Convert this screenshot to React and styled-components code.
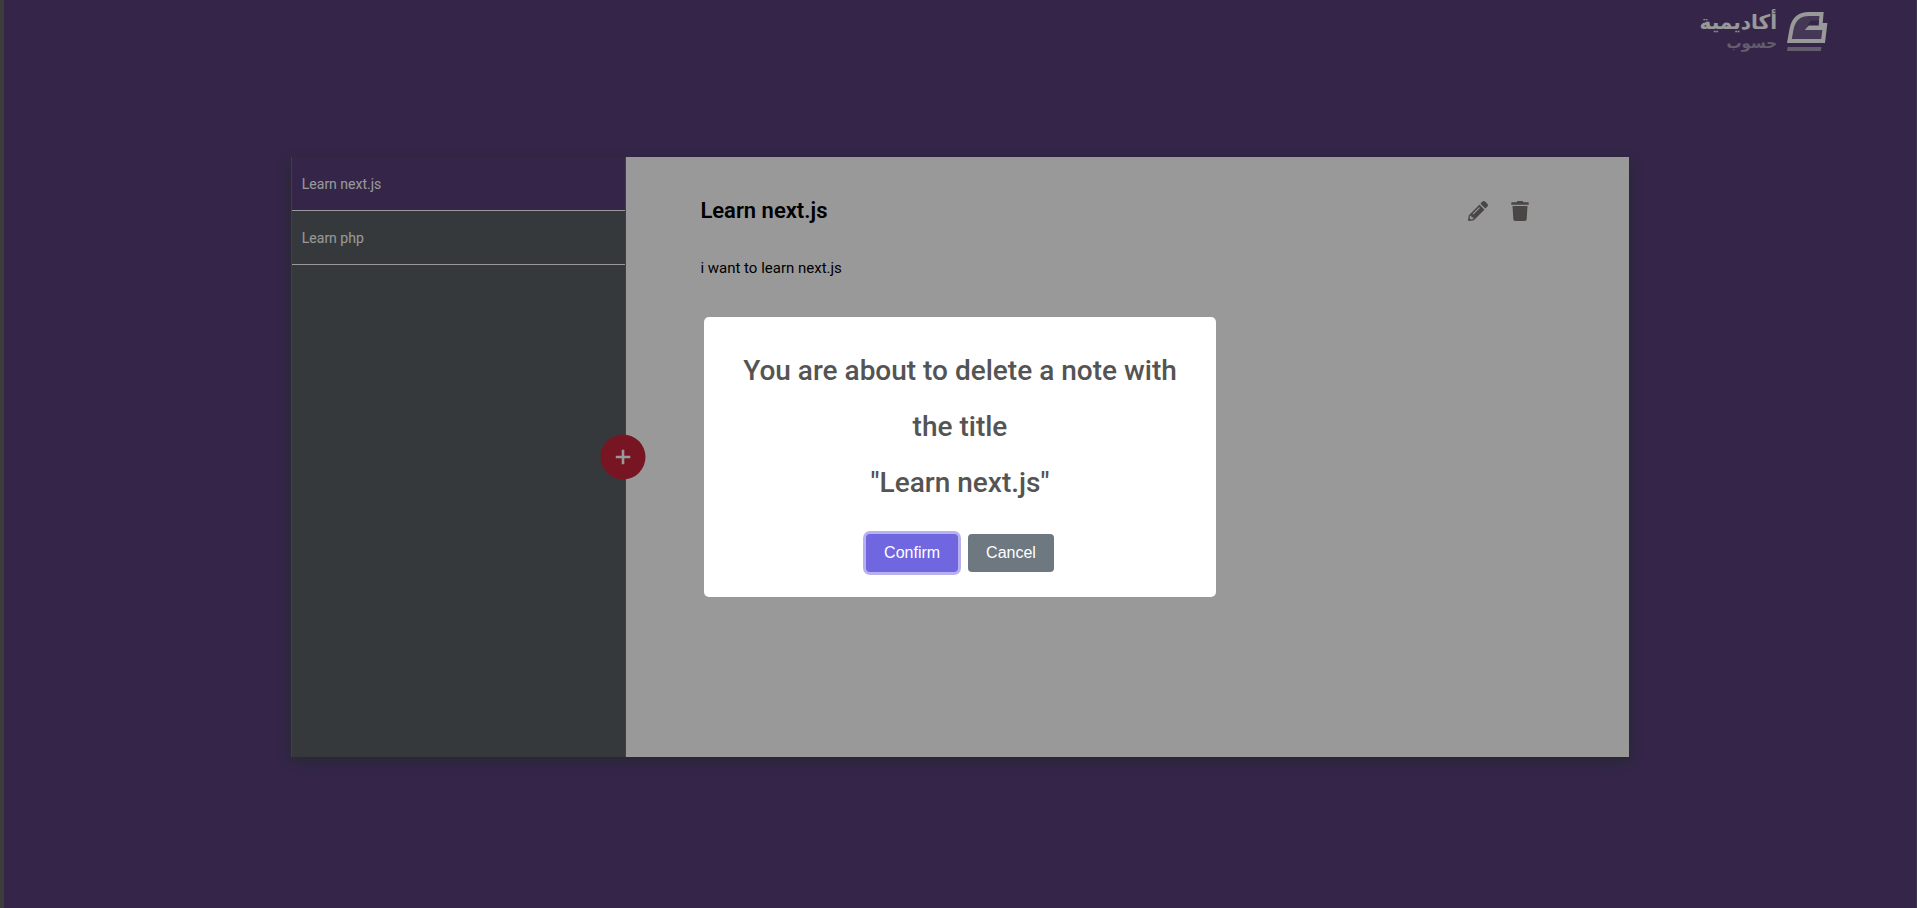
import React from 'react';
import styled, { createGlobalStyle } from 'styled-components';
import { FaPencilAlt, FaTrash } from 'react-icons/fa';

const GlobalStyle = createGlobalStyle`
  *, *::before, *::after { box-sizing: border-box; }
  body {
    margin: 0;
    background: #35264a;
    color: #000;
    font-family: Roboto, 'Noto Sans', 'DejaVu Sans', sans-serif;
  }
  button { font: inherit; cursor: pointer; }
`;

const Page = styled.div`
  min-height: 100vh;
  display: grid;
  grid-template-rows: 64px 1fr 58px;
  background: #583f7b;
  border-left: 4px solid #3c3c3c;
  border-right: 1px solid #3c3550;
`;

const Header = styled.header`
  display: flex;
  justify-content: flex-end;
  align-items: flex-start;
  padding: 12px 88px 0 0;
`;

const Brand = styled.a`
  display: flex;
  align-items: flex-start;
  gap: 10px;
  color: #fff;
  text-decoration: none;
`;

const BrandText = styled.span`
  display: flex;
  flex-direction: column;
  direction: rtl;
  font-family: 'DejaVu Sans', sans-serif;
  font-weight: 700;
`;

const BrandName = styled.span`
  font-size: 20px;
  line-height: 20px;
`;

const BrandSub = styled.span`
  font-size: 15px;
  line-height: 22px;
  color: #a79bb8;
`;

const Main = styled.main`
  display: grid;
  place-items: center;
`;

const Notebook = styled.div`
  position: relative;
  width: 70%;
  height: 600px;
  display: grid;
  grid-template-columns: calc(25% + 1px) 1fr;
  box-shadow: 0 4px 14px #40444e;
`;

const Sidebar = styled.aside`
  background: #5a5f65;
  border: solid #6a6a76;
  border-width: 0 1px;
`;

const NoteList = styled.ul`
  list-style: none;
  margin: 0;
  padding: 0;
`;

const NoteItem = styled.button`
  display: block;
  width: 100%;
  height: 54px;
  padding: 0 10px;
  border: 0;
  border-bottom: 1px solid #fff;
  background: ${(p) => (p.$active ? '#583f7b' : 'transparent')};
  color: #fff;
  font-size: 14px;
  text-align: left;
`;

const AddButton = styled.button`
  position: absolute;
  left: calc(25% - 2px);
  top: 50%;
  transform: translate(-50%, -50%);
  display: grid;
  place-items: center;
  width: 45px;
  height: 45px;
  padding: 0;
  border: 0;
  border-radius: 50%;
  background: #c82339;
  color: #fff;
`;

const Note = styled.article`
  padding: 40px 99px 0 74px;
  background: #fff;
`;

const NoteHead = styled.div`
  display: flex;
  justify-content: space-between;
  align-items: center;
  height: 28px;
`;

const NoteTitle = styled.h2`
  margin: 0;
  font-size: 22px;
  line-height: 28px;
  font-weight: 600;
`;

const Actions = styled.div`
  display: flex;
  gap: 22px;
`;

const IconButton = styled.button`
  display: flex;
  padding: 0;
  border: 0;
  background: none;
  color: #7b7573;
  font-size: 20px;
`;

const NoteBody = styled.p`
  margin: 31px 0 0;
  font-size: 15px;
  line-height: 24px;
`;

const Backdrop = styled.div`
  position: fixed;
  inset: 0 1px 0 4px;
  display: grid;
  place-items: center;
  padding-top: 6px;
  background: rgba(0, 0, 0, 0.4);
`;

const Dialog = styled.section`
  width: 512px;
  max-width: 100%;
  padding: 26px 32px 25px;
  border-radius: 5px;
  background: #fff;
  text-align: center;
`;

const DialogTitle = styled.h2`
  margin: 0 0 23px;
  color: #545454;
  font-size: 28px;
  line-height: 56px;
  font-weight: 500;
`;

const DialogActions = styled.div`
  display: flex;
  justify-content: center;
  gap: 10px;
`;

const DialogButton = styled.button`
  height: 38px;
  padding: 0 18px;
  border: 0;
  border-radius: 4px;
  background: ${(p) => (p.$primary ? '#7066e0' : '#6e7881')};
  box-shadow: ${(p) => (p.$primary ? '0 0 0 3px rgba(112, 102, 224, 0.5)' : 'none')};
  color: #fff;
  font-family: 'Liberation Sans', Arial, sans-serif;
  font-size: 16px;
`;

const notes = [
  { id: 1, title: 'Learn next.js', body: 'i want to learn next.js' },
  { id: 2, title: 'Learn php', body: '' },
];

function BrandMark() {
  return (
    <svg width="41" height="39" viewBox="0 0 41 39" aria-hidden="true">
      <path
        d="M22 0 H36.7 L35.7 11 H40.4 L38 31 H0 L2.7 16 Q6 0 22 0 Z"
        fill="#fff"
      />
      <path
        d="M22 4 H32.4 L31.8 10 L24 11 L17.8 18 H35.4 L34.2 27 H4.8 L6.6 17 Q9.4 4 22 4 Z"
        fill="#735e90"
      />
      <path d="M24 8.5 H32 L31.7 13.6 H20.4 Z" fill="#583f7b" />
      <path d="M0.6 35 H34.4 L33.8 39 H0 Z" fill="#a79bb8" />
    </svg>
  );
}

export default function App() {
  const current = notes[0];
  return (
    <>
      <GlobalStyle />
      <Page>
        <Header>
          <Brand href="#">
            <BrandText>
              <BrandName>أكاديمية</BrandName>
              <BrandSub>حسوب</BrandSub>
            </BrandText>
            <BrandMark />
          </Brand>
        </Header>
        <Main>
          <Notebook>
            <Sidebar>
              <NoteList>
                {notes.map((n) => (
                  <li key={n.id}>
                    <NoteItem type="button" $active={n.id === current.id}>
                      {n.title}
                    </NoteItem>
                  </li>
                ))}
              </NoteList>
            </Sidebar>
            <Note>
              <NoteHead>
                <NoteTitle>{current.title}</NoteTitle>
                <Actions>
                  <IconButton type="button" aria-label="Edit note">
                    <FaPencilAlt />
                  </IconButton>
                  <IconButton type="button" aria-label="Delete note">
                    <FaTrash />
                  </IconButton>
                </Actions>
              </NoteHead>
              <NoteBody>{current.body}</NoteBody>
            </Note>
            <AddButton type="button" aria-label="Add note">
              <svg width="15" height="15" viewBox="0 0 15 15" aria-hidden="true">
                <path d="M7.5 0 V15 M0 7.5 H15" stroke="currentColor" strokeWidth="2.6" />
              </svg>
            </AddButton>
          </Notebook>
        </Main>
      </Page>
      <Backdrop>
        <Dialog role="dialog" aria-modal="true" aria-labelledby="dialog-title">
          <DialogTitle id="dialog-title">
            You are about to delete a note with the title
            <br />
            "{current.title}"
          </DialogTitle>
          <DialogActions>
            <DialogButton type="button" $primary>
              Confirm
            </DialogButton>
            <DialogButton type="button">Cancel</DialogButton>
          </DialogActions>
        </Dialog>
      </Backdrop>
    </>
  );
}
